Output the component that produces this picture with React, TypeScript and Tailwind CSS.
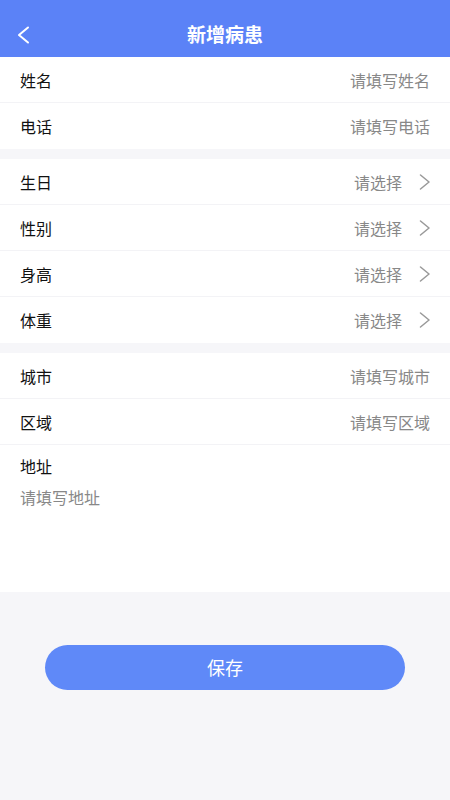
const font = { fontFamily: '"Noto Sans CJK SC", "Noto Sans", sans-serif' };

function Arrow() {
  return (
    <svg width="12" height="16" viewBox="0 0 12 16" className="ml-[17px] -mr-[1px]">
      <polyline points="1.5,1 10,8 1.5,15" fill="none" stroke="#999" strokeWidth="1.5" strokeLinecap="round" strokeLinejoin="round" />
    </svg>
  );
}

function InputRow({ label, placeholder, line = true }: { label: string; placeholder: string; line?: boolean }) {
  return (
    <div
      className={`flex h-[46px] items-center justify-between px-5 ${
        line ? "border-b border-[#f3f3f6]" : ""
      }`}
    >
      <span className="text-[16px] text-[#111]">{label}</span>
      <span className="text-[16px] text-[#888]">{placeholder}</span>
    </div>
  );
}

function SelectRow({ label, line = true }: { label: string; line?: boolean }) {
  return (
    <div
      className={`flex h-[46px] items-center justify-between px-5 ${
        line ? "border-b border-[#f3f3f6]" : ""
      }`}
    >
      <span className="text-[16px] text-[#111]">{label}</span>
      <div className="flex items-center">
        <span className="text-[16px] text-[#888]">请选择</span>
        <Arrow />
      </div>
    </div>
  );
}

export default function App() {
  return (
    <div className="flex min-h-[800px] flex-col bg-[#f6f6f9]" style={font}>
      <div className="relative flex h-[57px] items-center justify-center bg-[#5b82f7]">
        <svg width="14" height="18" viewBox="0 0 14 18" className="absolute left-[16px] top-[26px]">
          <polyline points="12,1.5 3,9 12,16.5" fill="none" stroke="#fff" strokeWidth="2" strokeLinecap="round" strokeLinejoin="round" />
        </svg>
        <span className="mt-[12px] text-[19px] font-bold text-white">新增病患</span>
      </div>

      <div className="bg-white">
        <InputRow label="姓名" placeholder="请填写姓名" />
        <InputRow label="电话" placeholder="请填写电话" line={false} />
      </div>

      <div className="mt-[10px] bg-white">
        <SelectRow label="生日" />
        <SelectRow label="性别" />
        <SelectRow label="身高" />
        <SelectRow label="体重" line={false} />
      </div>

      <div className="mt-[10px] bg-white">
        <InputRow label="城市" placeholder="请填写城市" />
        <InputRow label="区域" placeholder="请填写区域" />
        <div className="h-[147px] px-5 pt-[9px]">
          <div className="text-[16px] text-[#111]">地址</div>
          <div className="mt-[7px] text-[16px] text-[#888]">请填写地址</div>
        </div>
      </div>

      <div className="flex justify-center pt-[53px]">
        <button className="h-[45px] w-[360px] rounded-full bg-[#5f89f8] text-[18px] text-white">
          保存
        </button>
      </div>
    </div>
  );
}
